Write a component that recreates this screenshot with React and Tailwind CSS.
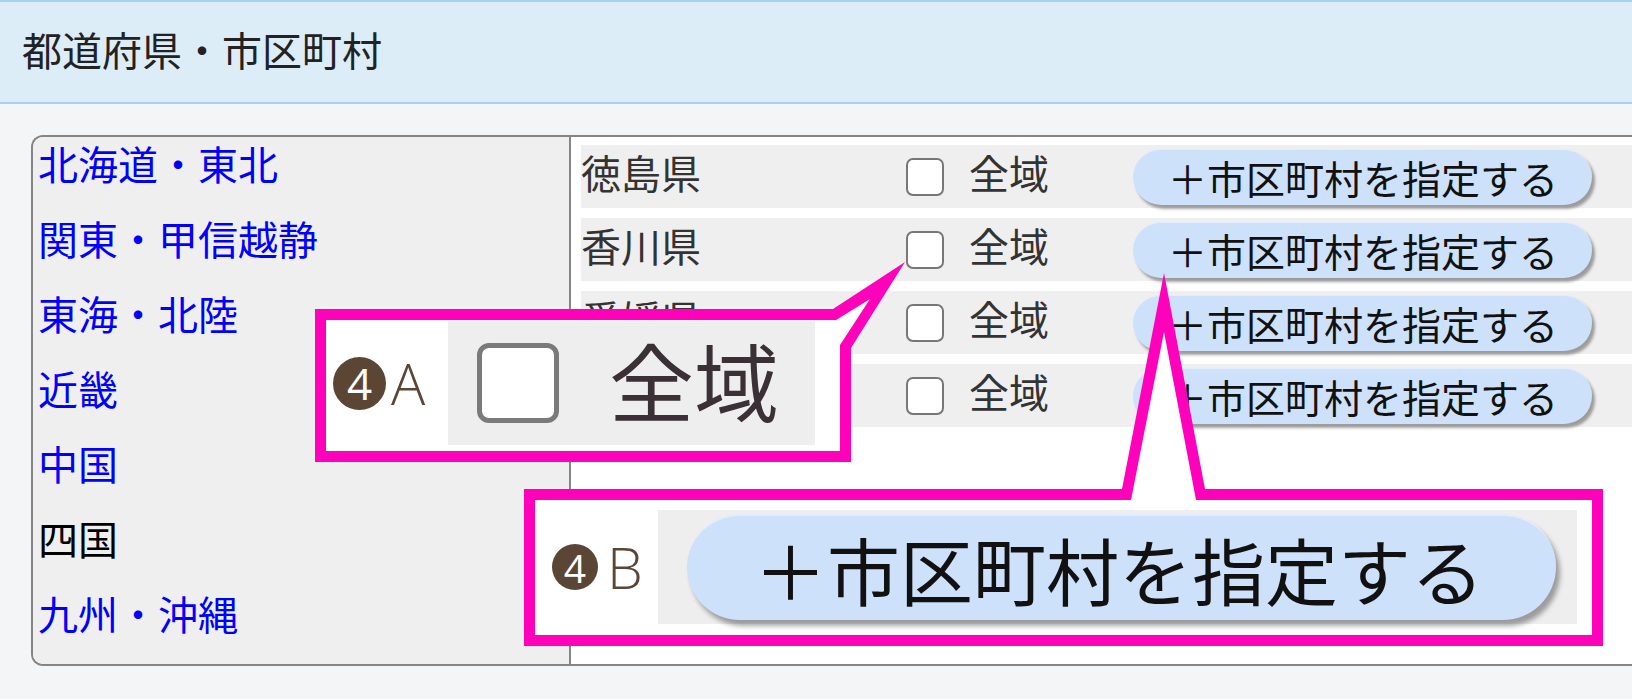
import React from 'react';

const regions = [
  { name: '北海道・東北', link: true },
  { name: '関東・甲信越静', link: true },
  { name: '東海・北陸', link: true },
  { name: '近畿', link: true },
  { name: '中国', link: true },
  { name: '四国', link: false },
  { name: '九州・沖縄', link: true },
];

const prefectures = ['徳島県', '香川県', '愛媛県', '高知県'];

const Check = ({ big }) => (
  <input
    type="checkbox"
    readOnly
    className={
      big
        ? 'appearance-none w-[82px] h-[80px] border-[5px] border-[#7a7a7a] rounded-[12px] bg-white'
        : 'appearance-none w-[38px] h-[38px] border-2 border-[#777] rounded-[7px] bg-white'
    }
  />
);

const Badge = ({ letter, big }) => (
  <div className={`flex items-center shrink-0 text-[#5b4636] ${big ? 'w-[115px] gap-[5px]' : 'w-[106px] gap-[9px]'}`}>
    <span
      className={`rounded-full bg-[#5b4636] text-white flex items-center justify-center leading-none font-['Open_Sans',sans-serif] ${
        big ? 'w-[53px] h-[53px] text-[44px]' : 'w-[46px] h-[46px] text-[39px]'
      }`}
    >
      4
    </span>
    <span className="text-[57px] leading-none font-light font-['Open_Sans',sans-serif]">{letter}</span>
  </div>
);

// magenta callout frames drawn on top of the page
const Callouts = () => (
  <svg className="absolute inset-0 z-10 pointer-events-none" width="1632" height="699" viewBox="0 0 1632 699">
    <polygon fill="#ff00bb" points="315,309 833,309 905,262 851,348 851,462 315,462" />
    <polygon fill="#fff" points="326,320 836,320 870,299 840,345 840,451 326,451" />
    <polygon fill="#ff00bb" points="524,489 1122,489 1164,273 1205,489 1603,489 1603,646 524,646" />
    <polygon fill="#fff" points="535,500 1131,500 1164,332 1196,500 1592,500 1592,635 535,635" />
  </svg>
);

export default function App() {
  return (
    <div className="relative w-full h-[699px] overflow-hidden bg-[#f3f5f7] font-['Noto_Sans_CJK_JP',sans-serif]">
      <header className="h-[104px] bg-[#dcedf8] border-t-2 border-b-2 border-[#a6d2ef] flex items-center pl-[22px]">
        <h1 className="text-[40px] leading-none text-[#222] pb-[6px]">都道府県・市区町村</h1>
      </header>

      <div className="pt-[31px] pl-[31px]">
        <div className="h-[531px] flex border-2 border-r-0 border-[#858585] rounded-l-[12px] overflow-hidden bg-white">
          <ul className="w-[538px] shrink-0 bg-[#efefef] border-r-2 border-[#858585] pl-[5px] flex flex-col gap-[15px]">
            {regions.map((r) => (
              <li
                key={r.name}
                className={`h-[60px] flex items-center pb-[8px] text-[40px] leading-none ${r.link ? 'text-[#0000ff]' : 'text-black'}`}
              >
                {r.name}
              </li>
            ))}
          </ul>

          <div className="flex-1 pt-[8px] pl-[10px] flex flex-col gap-[10px]">
            {prefectures.map((p) => (
              <div key={p} className="h-[63px] bg-[#efefef] flex items-center text-[40px] leading-none text-[#333]">
                <span className="w-[325px] shrink-0 pb-[9px]">{p}</span>
                <Check />
                <span className="ml-[25px] w-[164px] shrink-0 pb-[9px]">全域</span>
                <button className="w-[459px] h-[56px] shrink-0 rounded-full bg-[#cde1fa] border-t border-[#e2edfc] shadow-[3px_4px_3px_rgba(0,0,0,0.35)] pl-[35px] text-left text-[39px] leading-none text-[#111]">
                  ＋市区町村を指定する
                </button>
              </div>
            ))}
          </div>
        </div>
      </div>

      <Callouts />

      <div className="absolute z-20 left-[333px] top-[321px] flex items-center">
        <Badge letter="A" big />
        <div className="w-[367px] h-[124px] bg-[#eeeeee] flex items-center pl-[29px]">
          <Check big />
          <span className="ml-[50px] pb-[10px] text-[85px] leading-none text-[#3a3036]">全域</span>
        </div>
      </div>

      <div className="absolute z-20 left-[552px] top-[510px] flex items-center">
        <Badge letter="B" />
        <div className="w-[919px] h-[114px] bg-[#eeeeee] flex items-center pl-[29px]">
          <button className="w-[869px] h-[106px] rounded-full bg-[#cde1fa] border-t-2 border-[#e2edfc] shadow-[4px_6px_5px_rgba(0,0,0,0.35)] pl-[67px] text-left text-[73px] leading-none text-[#111]">
            ＋市区町村を指定する
          </button>
        </div>
      </div>
    </div>
  );
}
